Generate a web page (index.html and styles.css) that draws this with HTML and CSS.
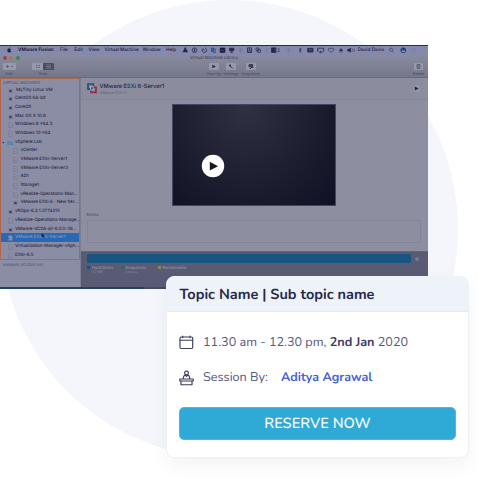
FILE: index.html
```html
<!DOCTYPE html>
<html lang="en">
<head>
<meta charset="utf-8">
<title>Reserve a session</title>
<link rel="stylesheet" href="styles.css">
</head>
<body>
<svg class="defs" width="0" height="0" aria-hidden="true">
  <symbol id="vm" viewBox="0 0 5 6"><path d="M.4.800h4.200v4.400H.4z" fill="#7f829a"/><path d="M1.400 1.900h2.200v2.200H1.400z" fill="#3b3d62"/></symbol>
  <symbol id="doc" viewBox="0 0 5 6"><path d="M.7.6h2.500l1.100 1.100v3.700H.7zM1.400 2.800h1.900M1.400 3.900h1.900" fill="#9699ae" stroke="#6c6f92" stroke-width=".6"/></symbol>
  <symbol id="folder" viewBox="0 0 6 6"><path d="M.2 1h2.200l.5.6h3v3.500H.2z" fill="#4a8bb2"/></symbol>
</svg>
<main class="stage">
  <div class="circle"></div>
  <section class="window">
    <div class="menubar">
      <svg width="18" height="8" viewBox="0 0 18 8"><path d="M9.400 2.200c.1-.7.5-1 1-1.100 0 .6-.4 1-1 1.100zM11 3c-1 .7-.8 1.700.2 2.200-.4 1.200-1 1.500-1.900 1.100-1 .4-1.500-.1-1.800-1C7 3.600 7.600 2.100 9.200 2.700c.7-.4 1.300-.3 1.800.3z" fill="#202247"/></svg>
      <b class="app">VMware Fusion</b><span>File</span><span>Edit</span><span>View</span><span class="wide">Virtual Machine</span><span class="wnd">Window</span><span>Help</span>
      <svg width="177" height="8" viewBox="184 0 177 8" fill="none" stroke="#24264b" stroke-width=".8">
        <path d="M187.400 5.700 189.200 2l2 3.700zM188.200 4h2M188 5h2.500" stroke-width="1.100"/>
        <circle cx="198.500" cy="4.200" r="2.300"/><path d="M198.500 2.800v2.800" stroke-width="1"/>
        <path d="M207 2.300a2.300 2.300 0 1 0 2-.4M208.500 4.400l-1.600-1.200"/>
        <path d="M215.300 2h2.600v3.800h-2.600z" fill="#315a96" stroke="#315a96"/><path d="M218 3h1.500v3.600H217" stroke="#315a96"/>
        <path d="M224.200 2h4.700v4.400h-4.700z" fill="#161b3e"/><path d="M225 4.500h3" stroke="#5e7295" stroke-width=".5"/>
        <path d="M233.600 2.200h4.200v2.500h-4.200zM235.700 4.700v1.700M234.400 6.300h2.500" fill="#24264b"/>
        <path d="M242.500 4.200l2.200-2 2.200 2-2.200 2zM244.700 2v4.500" stroke="#686d96" stroke-width=".6"/>
        <path d="M251.500 1.900h4v4.600h-4zM252 6l1.500-2 1.500 2"/><circle cx="253.500" cy="3.300" r=".5"/>
        <rect x="260" y="2" width="3" height="2.800" rx=".7"/><rect x="261.500" y="3.600" width="3" height="2.800" rx=".7"/>
        <path d="M270.700 2v4.400" stroke="#686d96" stroke-width=".6"/>
        <path d="M275.500 1.900h4.500v4.500h-4.500z" fill="#24264b"/><path d="M278.500 3h1M278.500 4.300h1" stroke="#8b90b3" stroke-width=".5"/>
        <path d="M281.800 2.700c.8-.8 2 .1 1.300 1.200l-1.300 1.700h1.900" stroke-width=".6"/>
        <path d="M290.500 3a2 2 0 1 1 .4 2.800M292.500 3v1.400h1" stroke="#6a6f98" stroke-width=".6"/>
        <path d="M303.200 3l2.200 2.200-1.200 1.200V2l1.200 1-2.200 2.200" stroke-width=".6"/>
        <path d="M311.700 2.300h5.200v3.700h-5.200z" fill="#24264b"/><path d="M312.500 3.500h3.600M312.500 4.800h3.600" stroke="#7176a0" stroke-width=".5"/>
        <path d="M323 5.200h-1.300v-3h6v3h-1.300"/><path d="M323 6.700l1.700-2 1.700 2z" fill="#24264b" stroke="none"/>
        <path d="M335 6.500 332 3.700c0-1.600 2-2 3-1 1-1 3-.6 3 1z" stroke-width=".6"/>
        <path d="M343.200 4.700 345 2.400l1.800 2.300zM343.300 5.900h3.500" fill="#24264b" stroke-width=".5"/>
        <path d="M351.800 3.300h1.300l1.400-1.100v4l-1.400-1.200h-1.300z" fill="#24264b"/><path d="M356 2.900q1 1.300 0 2.600M357.700 2.400q1.400 1.800 0 3.600" stroke-width=".5"/>
      </svg>
      <span class="user">David Davis</span>
      <svg width="38" height="8" viewBox="390 0 38 8" fill="none" stroke="#33365f" stroke-width=".6"><circle cx="395" cy="3.700" r="1.600"/><path d="m396.200 5 1.700 1.700"/><circle cx="407.300" cy="4.200" r="2.500" fill="#203f83" stroke="#203f83"/><path d="M405.500 4.500h3.600l-1 1.500h-1.500z" fill="#a1a8c6" stroke="none"/><path d="M415.500 2.500h5M415.500 4.200h5M415.500 5.900h5" stroke="#747ba4"/></svg>
    </div>
    <div class="toolbar">
      <div class="left-tools">
        <div class="lights"><i class="red"></i><i class="amber"></i><i class="green"></i></div>
        <div class="buttons">
          <div class="tool"><svg width="13" height="7" viewBox="0 0 13 7"><rect width="13" height="7" rx="1" fill="#9799aa"/><path d="M3 3.500h3M4.500 2v3M8 3l1 1 1-1" fill="none" stroke="#42445f" stroke-width=".6"/></svg><span>Add</span></div>
          <div class="tool view"><svg width="22" height="7" viewBox="0 0 22 7"><rect width="22" height="7" rx="1" fill="#9799aa"/><path d="M11 0h10a1 1 0 0 1 1 1v5a1 1 0 0 1-1 1H11z" fill="#4b4d63"/><path d="M4 2h1.300v1H4zM6.500 2h1.300v1H6.500zM4 4h1.300v1H4zM6.500 4h1.300v1H6.500z" fill="#55576e"/><path d="M14 2h5M14 3.500h5M14 5h5" stroke="#7e8095" stroke-width=".7"/></svg><span>View</span></div>
        </div>
      </div>
      <div class="mid-tools">
        <span class="wtitle">Virtual Machine Library</span>
        <div class="buttons mid">
          <div class="tool"><svg width="10" height="7" viewBox="0 0 10 7"><rect width="10" height="7" rx="1" fill="#9799aa"/><path d="m3.300 1.700 3.700 1.800-3.700 1.800z" fill="#25273f"/></svg><span>Start Up</span></div>
          <div class="tool"><svg width="10" height="7" viewBox="0 0 10 7"><rect width="10" height="7" rx="1" fill="#9799aa"/><path d="m4.300 3 2.500 2.500" stroke="#25273f"/><circle cx="4" cy="2.500" r="1" fill="#25273f"/></svg><span>Settings</span></div>
          <div class="tool snap"><svg width="10" height="7" viewBox="0 0 10 7"><rect width="10" height="7" rx="1" fill="#9799aa"/><path d="M3 1.500h3.700V4H3zM5 4.500h2.500" fill="#44465d" stroke="#25273f" stroke-width=".7"/><path d="m4 5.300 1 .5" stroke="#25273f"/></svg><span>Snapshots</span></div>
        </div>
      </div>
      <div class="tool del"><svg width="9" height="7" viewBox="0 0 9 7"><rect width="9" height="7" rx="1" fill="#9799aa"/><path d="M3 2h3v3.500H3zM2.600 1.700h3.800M4 3v1.700M5 3v1.700" fill="none" stroke="#35374f" stroke-width=".5"/></svg><span>Delete</span></div>
    </div>
    <div class="body">
      <aside class="sidebar">
        <div class="list">
          <h2>VIRTUAL MACHINES</h2>
          <ul>
            <li class="first"><svg><use href="#vm"/></svg>MyTiny Linux VM</li>
            <li><svg><use href="#vm"/></svg>CentOS 64-bit</li>
            <li><svg><use href="#vm"/></svg>CoreOS</li>
            <li><svg><use href="#vm"/></svg>Mac OS X 10.8</li>
            <li><svg><use href="#doc"/></svg>Windows 8 x64 2</li>
            <li><svg><use href="#doc"/></svg>Windows 10 x64</li>
            <li class="group"><span class="caret"></span><svg><use href="#folder"/></svg>vSphere Lab</li>
            <li class="sub"><svg><use href="#doc"/></svg>vCenter</li>
            <li class="sub"><svg><use href="#doc"/></svg>VMware ESXi-Server1</li>
            <li class="sub"><svg><use href="#doc"/></svg>VMware ESXi-Server3</li>
            <li class="sub"><svg><use href="#doc"/></svg>AD1</li>
            <li class="sub"><svg><use href="#doc"/></svg>Storage1</li>
            <li class="sub tight"><svg><use href="#doc"/></svg>vRealize-Operations-Man...</li>
            <li class="sub tight"><svg><use href="#vm"/></svg>VMware ESXi 6 - New Ser...</li>
            <li><svg><use href="#vm"/></svg>vROps-6.2.1.3774215</li>
            <li class="tight"><svg><use href="#doc"/></svg>vRealize-Operations-Manage...</li>
            <li class="tight"><svg><use href="#vm"/></svg>VMware-VCSA-all-6.0.0-36...</li>
            <li class="selected"><svg><use href="#doc"/></svg>VMware ESXi 6-Server1<span class="cursor"><svg viewBox="0 0 4 5"><path d="M.5.2v4l1-1 .7 1.500.8-.4-.6-1.300h1.200z" fill="#111633"/></svg></span></li>
            <li class="tight"><svg><use href="#doc"/></svg>Virtualization-Manager-vSph...</li>
            <li><svg><use href="#doc"/></svg>ESXi-6.5</li>
          </ul>
        </div>
        <h2 class="cloud">VMWARE VCLOUD AIR</h2>
      </aside>
      <div class="content">
        <header class="vmhead">
          <svg width="10" height="11" viewBox="0 0 10 11" fill="none" stroke-width="1.700"><path d="M6.200 6.200H1V1h5.300v2" stroke="#234d82"/><path d="M4 4.400h5v5H4V7.500" stroke="#922c4c"/><path d="M3.500 3.700h2.800v3H3.500z" stroke="#b3b8cb" stroke-width=".8"/></svg>
          <div class="names"><span class="name">VMware ESXi 6-Server1</span><span class="os">VMware ESXi 6</span></div>
          <svg class="run" width="9" height="9" viewBox="0 0 9 9"><circle cx="4.500" cy="4.500" r="4.200" fill="#9698aa" stroke="#7d7f94" stroke-width=".4"/><path d="m2.800 2.500 4 2-4 2z" fill="#222441"/></svg>
        </header>
        <div class="preview"><svg class="play" viewBox="0 0 24 24"><circle cx="12" cy="12" r="11.200" fill="#fff"/><path d="m8.800 7.800 8.200 4.400-8.200 4.400z" fill="#161725"/></svg></div>
        <span class="notes-label">Notes</span>
        <div class="notes"></div>
        <footer class="disk">
          <div class="barrow"><div class="bar"></div><i class="gear"></i></div>
          <div class="legend">
            <div><i class="k1"></i><p><b>Hard Disks</b><small>9.7 MB</small></p></div>
            <div><i class="k2"></i><p><b>Snapshots</b><small>0 bytes</small></p></div>
            <div><i class="k3"></i><p><b>Reclaimable</b></p></div>
          </div>
        </footer>
      </div>
    </div>
    <div class="edge"></div>
  </section>
  <article class="card">
    <h1><span>Topic Name | Sub topic name</span></h1>
    <div class="card-body">
      <div class="row">
        <svg width="15" height="15" viewBox="0 0 15 15" fill="none" stroke="#3d3b60" stroke-width="1.150" stroke-linecap="round"><rect x="1" y="2" width="12.700" height="11.500" rx="1.200"/><path d="M1 5.200h12.700M3.700 1v1.700M11 1v1.700"/></svg>
        <span class="date">11.30 am - 12.30 pm, <b>2nd Jan</b> 2020</span>
      </div>
      <div class="row">
        <svg width="15" height="16" viewBox="0 0 15 16" fill="none" stroke="#3d3b60" stroke-width="1.150" stroke-linejoin="round"><circle cx="7.500" cy="3" r="1.900"/><path d="M4.300 9V7.700Q4.500 5.900 6 5l1.500 1.300L9 5q1.500.9 1.700 2.700V9M.8 9h13.400v2H.8zM2 11v3.700h11V11"/></svg>
        <span class="by">Session By:</span><b class="host">Aditya Agrawal</b>
      </div>
      <button type="button"><span>RESERVE NOW</span></button>
    </div>
  </article>
</main>
</body>
</html>
```

FILE: styles.css
```css
* { box-sizing: border-box; margin: 0; padding: 0; }
body { background: #fff; width: 480px; height: 479px; overflow: hidden; font-family: Inter, "Liberation Sans", sans-serif; text-rendering: geometricPrecision; }
.defs { position: absolute; }
.stage { position: relative; width: 480px; height: 479px; overflow: hidden; padding-top: 45px; }
.circle { position: absolute; left: 0; top: 0; width: 458px; height: 458px; border-radius: 50%; background: #f4f6fc; }
svg { display: block; flex: none; }

.window { position: relative; width: 428px; height: 244px; background: #8d8fa1; color: #292b4c; display: flex; flex-direction: column; border-top: 1px solid #292d4d; overflow: hidden; }
.menubar { height: 8.500px; flex: none; display: flex; align-items: center; background: #858aad; font-size: 4.700px; line-height: 8px; white-space: nowrap; color: #1d2044; font-weight: 500; }
.menubar > span { width: 14.300px; }
.menubar .app { width: 42px; letter-spacing: .02px; font-weight: 700; }
.menubar .wide { width: 39.500px; padding-left: 1.700px; letter-spacing: -.07px; }
.menubar .wnd { width: 23.500px; }
.menubar .user { width: 28.700px; padding-left: .500px; }
.toolbar { height: 23.500px; flex: none; display: flex; background: linear-gradient(#898b9e, #747689); border-bottom: 1px solid #676a80; font-size: 3.800px; font-weight: 500; color: #4c4e67; }
.left-tools { width: 190px; padding-left: 2.500px; }
.lights { display: flex; gap: 2.600px; height: 7px; align-items: center; }
.lights i { width: 4.200px; height: 4.200px; border-radius: 50%; }
.red { background: #a33e50; }
.amber { background: #a77b43; }
.green { background: #388454; }
.buttons { display: flex; padding-top: 1.500px; }
.tool { display: flex; flex-direction: column; align-items: center; gap: 1px; line-height: 5px; width: 13px; white-space: nowrap; }
.tool.view { width: 22px; margin-left: 16.500px; }
.mid-tools { flex: 1; }
.wtitle { display: block; font-size: 4.350px; line-height: 7.500px; color: #45475f; }
.buttons.mid { padding: 1px 0 0 15.500px; }
.mid .tool { width: 17px; }
.mid .snap { width: 22px; }
.del { padding-top: 8.500px; margin-right: 3px; }

.body { flex: 1; display: flex; min-height: 0; }
.sidebar { width: 80px; background: #8b8da4; }
.list { height: 181.500px; border: 1px solid #b0674f; padding-top: 1px; }
h2 { font-size: 3.700px; line-height: 5px; padding-left: 2px; font-weight: 500; color: #53556f; letter-spacing: .05px; }
ul { list-style: none; padding-top: .700px; }
li { position: relative; height: 8.690px; display: flex; align-items: center; gap: 2.500px; padding-left: 6.500px; padding-top: 1px; font-size: 4.450px; font-weight: 500; white-space: nowrap; color: #25274a; line-height: 8px; }
li > svg { width: 5px; height: 6px; }
li.first { gap: 3.500px; }
li.sub { padding-left: 12px; }
li.tight { letter-spacing: -.045px; }
li.group { padding-left: 1px; gap: 0; }
li.group svg { width: 6px; margin: 0 2px 0 2.500px; }
.caret { width: 2.500px; height: 2px; background: #34365a; clip-path: polygon(0 0, 100% 0, 50% 100%); }
li.selected { background: #2a68b5; color: #8599c0; }
.cursor { position: absolute; left: 39.500px; top: 0; }
.cursor svg { width: 4px; height: 5px; }
.cloud { padding: 3.500px 0 0 3px; font-size: 3.600px; }

.content { flex: 1; display: flex; flex-direction: column; min-width: 0; border-left: 1px solid #7c7e94; }
.vmhead { height: 22px; flex: none; display: flex; align-items: center; padding: 0 7px 0 5.500px; background: #8b8d9f; border-bottom: 1px solid #858799; }
.names { flex: 1; display: flex; flex-direction: column; padding-left: 3px; }
.name { font-size: 5.700px; line-height: 7px; font-weight: 500; color: #202240; }
.os { font-size: 3.700px; line-height: 5px; color: #5f617a; }
.preview { position: relative; width: 164px; height: 102px; flex: none; margin: 4px 0 0 91px; border: 1px solid #444761; background: radial-gradient(ellipse at 45% 0, #303244 0, #1d1f31 55%, #0e1123 100%); }
.play { position: absolute; left: 27.500px; top: 49px; width: 24px; height: 24px; }
.notes-label { font-size: 4.300px; font-weight: 500; line-height: 6px; margin: 7.300px 0 1px 5.500px; color: #4e506b; }
.notes { height: 23px; flex: none; margin: 0 7px 0 5.500px; border: 1px solid #828497; }
.disk { margin-top: 8px; flex: 1; background: #595a74; padding: 2px 0 0 6px; border-top: 1px solid #626480; }
.barrow { display: flex; align-items: center; gap: 4px; }
.bar { width: 323.500px; height: 8.500px; background: #195581; border-radius: 1px; }
.gear { width: 4px; height: 4px; border-radius: 50%; background: #77798f; }
.legend { display: flex; padding-top: 2px; font-size: 4.100px; line-height: 5px; color: #898ba4; }
.legend > div { display: flex; width: 33.500px; gap: 1.500px; }
.legend > div:nth-child(2) { width: 37px; }
.legend i { width: 3.300px; height: 3.300px; margin-top: 1px; flex: none; }
.legend b, .legend small { display: block; }
.legend b { font-weight: 600; }
.legend small { font-size: 3.300px; line-height: 5px; }
.k1 { background: #174e7e; }
.k2 { background: #267164; }
.k3 { background: #8c8955; }
.edge { height: 2px; flex: none; background: linear-gradient(90deg, #1b4267 0 144px, #444966 144px); }

.card { position: absolute; left: 166px; top: 276px; width: 303px; height: 182px; border-radius: 8px; background: #fff; border: 1px solid #edf2f7; box-shadow: 0 8px 18px rgba(60, 70, 90, .06); font-family: Nunito, "Noto Sans", sans-serif; color: #57557b; }
h1 { height: 35px; padding-left: 12.500px; border-radius: 7px 7px 0 0; background: #eef3f9; border-bottom: 1px solid #e5ebf2; color: #282849; font-size: 14.500px; line-height: 36px; font-weight: 700; white-space: nowrap; }
.card-body { padding: 13px 12px 0; }
.row { height: 35.500px; display: flex; align-items: center; white-space: nowrap; font-size: 12.650px; line-height: 18px; }
.row svg { margin-right: 9px; }
.row b { font-weight: 700; color: #3e3c66; }
.by { width: 78px; }
.row .host { color: #4762d3; font-size: 12.500px; }
button { display: block; width: 277px; height: 33px; margin-top: 10.500px; border: 1px solid #4eb8dc; border-radius: 5px; background: #2fa9d6; color: #f3fbff; font: 600 14.600px/32px Nunito, "Noto Sans", sans-serif; text-rendering: inherit; }
```
